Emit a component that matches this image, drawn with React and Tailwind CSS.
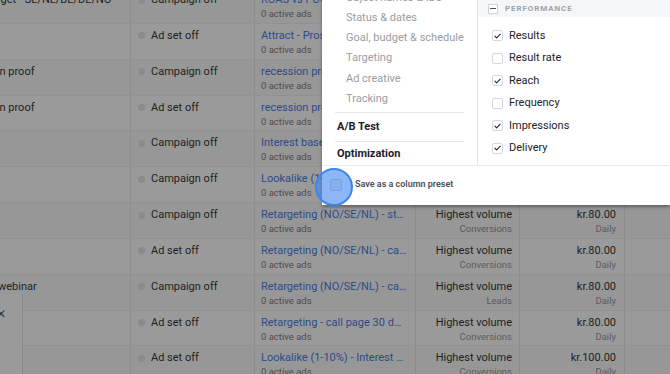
import React from 'react';

const rows = [
  { name: 'Target - SE/NL/BE/DE/NO', shift: '-ml-[15px]', status: 'Campaign off', adset: 'ROAS vs POC', goal: 'Conversions', budget: 'kr.80.00' },
  { name: '', status: 'Ad set off', adset: 'Attract - Prospecting', goal: 'Conversions', budget: 'kr.80.00' },
  { name: 'Recession proof', shift: '-ml-[45px]', status: 'Campaign off', adset: 'recession proof - lookalike', goal: 'Conversions', budget: 'kr.80.00' },
  { name: 'Recession proof', shift: '-ml-[45px]', status: 'Ad set off', adset: 'recession proof - interest', goal: 'Conversions', budget: 'kr.80.00' },
  { name: '', status: 'Campaign off', adset: 'Interest based', goal: 'Conversions', budget: 'kr.80.00' },
  { name: '', status: 'Campaign off', adset: 'Lookalike (1-10%)', goal: 'Conversions', budget: 'kr.80.00' },
  { name: '', status: 'Campaign off', adset: 'Retargeting (NO/SE/NL) - standard', goal: 'Conversions', budget: 'kr.80.00' },
  { name: '', status: 'Ad set off', adset: 'Retargeting (NO/SE/NL) - call page', goal: 'Conversions', budget: 'kr.80.00' },
  { name: 'Free webinar', shift: '-ml-[26px]', status: 'Campaign off', adset: 'Retargeting (NO/SE/NL) - call page webinar', goal: 'Leads', budget: 'kr.80.00' },
  { name: '', status: 'Ad set off', adset: 'Retargeting - call page 30 days', goal: 'Conversions', budget: 'kr.80.00' },
  { name: '', status: 'Ad set off', adset: 'Lookalike (1-10%) - Interest based', goal: 'Conversions', budget: 'kr.100.00' },
];

const navItems = ['Object names & IDs', 'Status & dates', 'Goal, budget & schedule', 'Targeting', 'Ad creative', 'Tracking'];

const metrics = [
  { label: 'Results', on: true },
  { label: 'Result rate', on: false },
  { label: 'Reach', on: true },
  { label: 'Frequency', on: false },
  { label: 'Impressions', on: true },
  { label: 'Delivery', on: true },
  { label: 'Cost per result', on: false },
];

function Check({ on }) {
  return (
    <div className="w-[11px] h-[11px] rounded-[2px] border border-[#d5d8dc] bg-white flex items-center justify-center shrink-0">
      {on && (
        <svg viewBox="0 0 12 12" className="w-[10px] h-[10px]" fill="none" stroke="#1d2129" strokeWidth="1.4" strokeLinecap="round" strokeLinejoin="round">
          <path d="M2.5 6.2l2.3 2.3L9.6 3.6" />
        </svg>
      )}
    </div>
  );
}

function Row({ row, idx }) {
  return (
    <div className={`flex h-[35.85px] border-b border-[#929292] ${idx % 2 ? 'bg-[#9a9a9a]' : 'bg-[#979797]'}`}>
      <div className="w-[131px] shrink-0 overflow-hidden border-r border-[#8c8c8c] pt-[5px]">
        <div className={`whitespace-nowrap text-[11px] leading-[14px] text-[#1e1f21] ${row.shift || ''}`}>{row.name}</div>
      </div>
      <div className="w-[124px] shrink-0 border-r border-[#8c8c8c] pt-[5px] pl-[7px] flex items-start gap-[6px]">
        <div className="w-[7px] h-[7px] rounded-full bg-[#8b8b8b] mt-[3.5px]"></div>
        <div className="text-[11px] leading-[14px] text-[#1e1f21]">{row.status}</div>
      </div>
      <div className="w-[161px] shrink-0 border-r border-[#8c8c8c] pt-[5px] pl-[6px] pr-[8px] min-w-0">
        <div className="truncate text-[11px] leading-[14px] text-[#2d4b88]">{row.adset}</div>
        <div className="text-[9.5px] leading-[13px] text-[#4c4c4c]">0 active ads</div>
      </div>
      <div className="w-[104px] shrink-0 border-r border-[#8c8c8c] pt-[5px] pr-[7px] text-right">
        <div className="text-[11px] leading-[14px] text-[#1e1f21]">Highest volume</div>
        <div className="text-[9.5px] leading-[13px] text-[#5a5a5a]">{row.goal}</div>
      </div>
      <div className="w-[105px] shrink-0 border-r border-[#8c8c8c] pt-[5px] pr-[8px] text-right">
        <div className="text-[11px] leading-[14px] text-[#1e1f21]">{row.budget}</div>
        <div className="text-[9.5px] leading-[13px] text-[#5a5a5a]">Daily</div>
      </div>
      <div className="flex-1"></div>
    </div>
  );
}

export default function App() {
  return (
    <div className="relative w-[670px] h-[374px] overflow-hidden bg-[#999999]" style={{ fontFamily: 'Roboto, "Liberation Sans", sans-serif' }}>
      <div className="-mt-[12px]">
        {rows.map((r, i) => (
          <Row key={i} row={r} idx={i} />
        ))}
      </div>

      {/* partial popover at left edge */}
      <div className="absolute left-0 top-[294px] w-[23px] h-[80px] bg-[#9a9a9a] border-r border-[#8a8a8a] overflow-hidden">
        <div className="absolute -left-[4px] top-[13px] text-[12px] leading-[14px] text-[#333]">✕</div>
      </div>

      {/* column picker */}
      <div className="absolute left-[322px] top-0 w-[348px] h-[205px] bg-white shadow-[0_2px_3px_rgba(0,0,0,0.35)] flex flex-col">
        <div className="h-[165px] flex overflow-hidden">
          <div className="w-[156px] shrink-0 border-r border-[#e3e5e8]">
            <div className="-mt-[12px] pl-[24px]">
              {navItems.map((n) => (
                <div key={n} className="h-[20.2px] flex items-center text-[11px] text-[#9a9da3] whitespace-nowrap">{n}</div>
              ))}
            </div>
            <div className="mx-[13px] mt-[3px] border-t border-[#e5e7ea]"></div>
            <div className="h-[28px] flex items-center pl-[15px] text-[11px] font-bold text-[#1d2129]">A/B Test</div>
            <div className="mx-[13px] border-t border-[#e5e7ea]"></div>
            <div className="h-[25px] flex items-center pl-[15px] text-[11px] font-bold text-[#1d2129]">Optimization</div>
          </div>
          <div className="flex-1">
            <div className="h-[17px] bg-[#f5f6f7] flex items-center pl-[10px] gap-[7px]">
              <div className="w-[10px] h-[10px] border border-[#d0d3d8] bg-white flex items-center justify-center">
                <div className="w-[6px] h-[1.5px] bg-[#4b4f56]"></div>
              </div>
              <div className="text-[8px] font-bold tracking-[0.9px] text-[#9ea2a9]">PERFORMANCE</div>
            </div>
            <div className="pt-[7.5px] pl-[14px]">
              {metrics.map((m) => (
                <div key={m.label} className="h-[22.5px] flex items-center gap-[6px]">
                  <Check on={m.on} />
                  <div className="text-[11px] text-[#1d2129]">{m.label}</div>
                </div>
              ))}
            </div>
          </div>
        </div>
        <div className="relative h-[40px] border-t border-[#e9ebee] flex items-center pl-[8px] gap-[13px] pb-[1px]">
          <div className="w-[12px] h-[12px] rounded-[2px] border border-[#c4c7cc] bg-[#eeeeee]"></div>
          <div className="text-[9px] font-semibold text-[#4b4f56]">Save as a column preset</div>
          <div className="absolute -left-[7px] top-[2px] w-[38px] h-[38px] rounded-full bg-[#3f86ee]/60 border-2 border-[#3a86f0]"></div>
        </div>
      </div>
    </div>
  );
}
